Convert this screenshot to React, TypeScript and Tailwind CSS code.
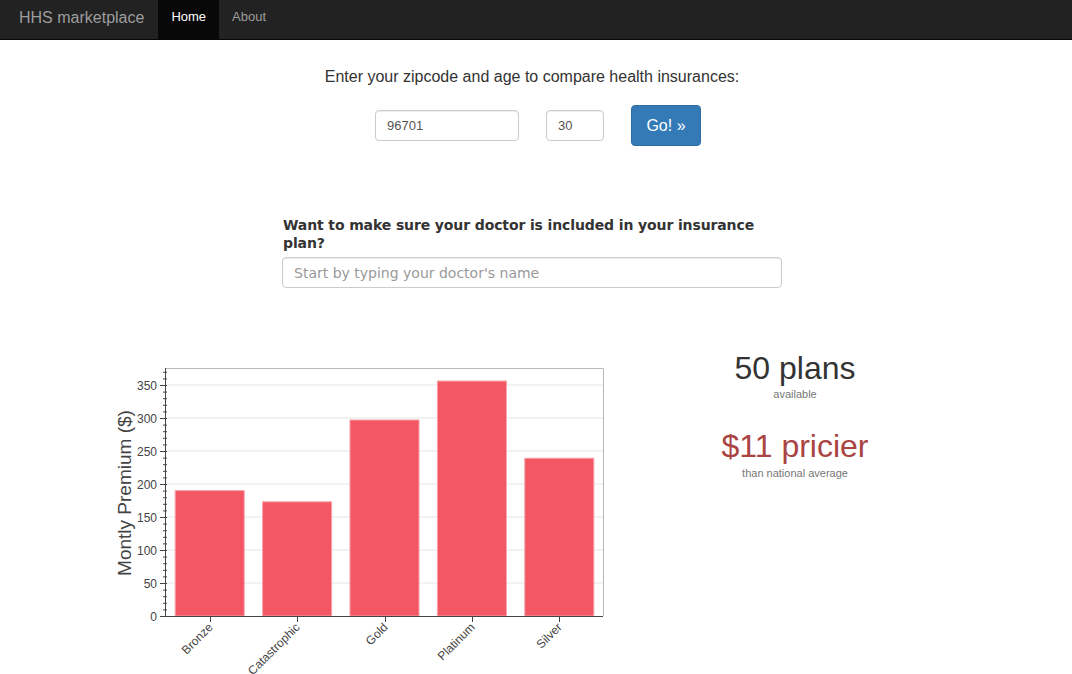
const plans = [
  { name: 'Bronze', value: 190 },
  { name: 'Catastrophic', value: 173 },
  { name: 'Gold', value: 297 },
  { name: 'Platinum', value: 356 },
  { name: 'Silver', value: 239 },
];

// plot box in page pixels
const LEFT = 166;
const RIGHT = 603;
const TOP = 369;
const BOTTOM = 616;
const PX = 0.66;

const y = (v: number) => BOTTOM - v * PX;

const PremiumChart = () => {
  const band = (RIGHT - LEFT) / plans.length;
  const majors = [0, 50, 100, 150, 200, 250, 300, 350];
  const minors = Array.from({ length: 38 }, (_, i) => i * 10);

  return (
    <svg
      width={520}
      height={319}
      viewBox="100 355 520 319"
      className="block"
      style={{ fontFamily: '"Liberation Sans", Arial, sans-serif' }}
    >
      {majors.slice(1).map((v) => (
        <line key={v} x1={LEFT} x2={RIGHT} y1={y(v)} y2={y(v)} stroke="#e5e5e5" strokeWidth={1} />
      ))}
      <line x1={LEFT} x2={RIGHT} y1={TOP - 0.5} y2={TOP - 0.5} stroke="#b8b8b8" />
      <line x1={RIGHT + 0.5} x2={RIGHT + 0.5} y1={TOP - 0.5} y2={BOTTOM} stroke="#b8b8b8" />

      {plans.map((p, i) => {
        const cx = LEFT + band * (i + 0.5);
        const w = band * 0.79;
        return (
          <rect
            key={p.name}
            x={cx - w / 2}
            y={y(p.value)}
            width={w}
            height={BOTTOM - y(p.value)}
            fill="#f1404f"
            fillOpacity={0.88}
            stroke="#f7a3ab"
            strokeWidth={1}
          />
        );
      })}

      {/* y axis */}
      <line x1={LEFT - 0.5} x2={LEFT - 0.5} y1={TOP - 1} y2={BOTTOM} stroke="#444" />
      {minors.map((v) => (
        <line key={v} x1={LEFT - 3} x2={LEFT + 1} y1={y(v) + 0.5} y2={y(v) + 0.5} stroke="#444" />
      ))}
      {majors.map((v) => (
        <g key={v}>
          <line x1={LEFT - 6} x2={LEFT + 1} y1={y(v) + 0.5} y2={y(v) + 0.5} stroke="#444" />
          <text x={157} y={y(v) + 4.5} textAnchor="end" fontSize={12} fill="#444">
            {v}
          </text>
        </g>
      ))}

      {/* x axis */}
      <line x1={LEFT - 1} x2={RIGHT} y1={BOTTOM + 0.5} y2={BOTTOM + 0.5} stroke="#444" />
      {plans.map((p, i) => {
        const cx = Math.round(LEFT + band * (i + 0.5)) + 0.5;
        return (
          <g key={p.name}>
            <line x1={cx} x2={cx} y1={BOTTOM} y2={BOTTOM + 6} stroke="#444" />
            <text
              x={cx + 3}
              y={BOTTOM + 12}
              textAnchor="end"
              fontSize={12}
              fill="#444"
              transform={`rotate(-45 ${cx + 3} ${BOTTOM + 12})`}
            >
              {p.name}
            </text>
          </g>
        );
      })}

      <text
        x={131}
        y={493}
        textAnchor="middle"
        fontSize={19}
        fill="#444"
        transform="rotate(-90 131 493)"
      >
        Montly Premium ($)
      </text>
    </svg>
  );
};

export default function App() {
  return (
    <div className="min-h-[674px] bg-white font-['Liberation_Sans',Arial,sans-serif] text-[#333]">
      <nav className="flex h-10 items-stretch border-b border-[#080808] bg-[#222]">
        <span className="flex items-center pb-[4px] pl-[19px] pr-[14px] text-[16px] text-[#9d9d9d]">HHS marketplace</span>
        <span className="flex items-center bg-[#080808] px-[13px] pb-[6px] text-[13px] text-white">Home</span>
        <span className="flex items-center px-[13px] pb-[6px] text-[13px] text-[#9d9d9d]">About</span>
      </nav>

      <div className="flex flex-col items-center">
        <p className="mt-[27px] mr-[8px] text-[16px] leading-5">Enter your zipcode and age to compare health insurances:</p>

        <div className="mt-[18px] ml-[4px] flex items-center gap-[27px]">
          <input
            defaultValue="96701"
            className="h-[31px] w-[144px] rounded border border-[#ccc] px-[11px] text-[13px] text-[#555] shadow-[inset_0_1px_1px_rgba(0,0,0,0.075)] outline-none"
          />
          <input
            defaultValue="30"
            className="h-[31px] w-[58px] rounded border border-[#ccc] px-[11px] text-[13px] text-[#555] shadow-[inset_0_1px_1px_rgba(0,0,0,0.075)] outline-none"
          />
          <button className="h-[41px] w-[70px] rounded border border-[#2e6da4] bg-[#337ab7] text-[16px] text-white">
            Go! »
          </button>
        </div>

        <div className="mt-[70px] mr-[8px] w-[500px] font-['DejaVu_Sans',sans-serif]">
          <p className="pl-px text-[14px] font-bold leading-[18px] tracking-[-0.12px] text-[#333]">
            Want to make sure your doctor is included in your insurance plan?
          </p>
          <input
            placeholder="Start by typing your doctor's name"
            className="mt-[5px] h-[31px] w-full rounded border border-[#ccc] px-[11px] text-[14px] text-[#555] shadow-[inset_0_1px_1px_rgba(0,0,0,0.075)] outline-none placeholder:text-[#999]"
          />
        </div>
      </div>

      <div className="mt-[67px] grid grid-cols-[620px_350px]">
        <div className="pl-[100px]">
          <PremiumChart />
        </div>
        <div className="-mt-[4px] flex flex-col items-center">
          <p className="text-[32px] leading-[35px]">50 plans</p>
          <p className="mt-px text-[11px] leading-[14px] text-[#777]">available</p>
          <p className="mt-[28px] text-[32px] leading-[35px] text-[#a94442]">$11 pricier</p>
          <p className="mt-[2px] text-[11px] leading-[14px] text-[#777]">than national average</p>
        </div>
      </div>
    </div>
  );
}
